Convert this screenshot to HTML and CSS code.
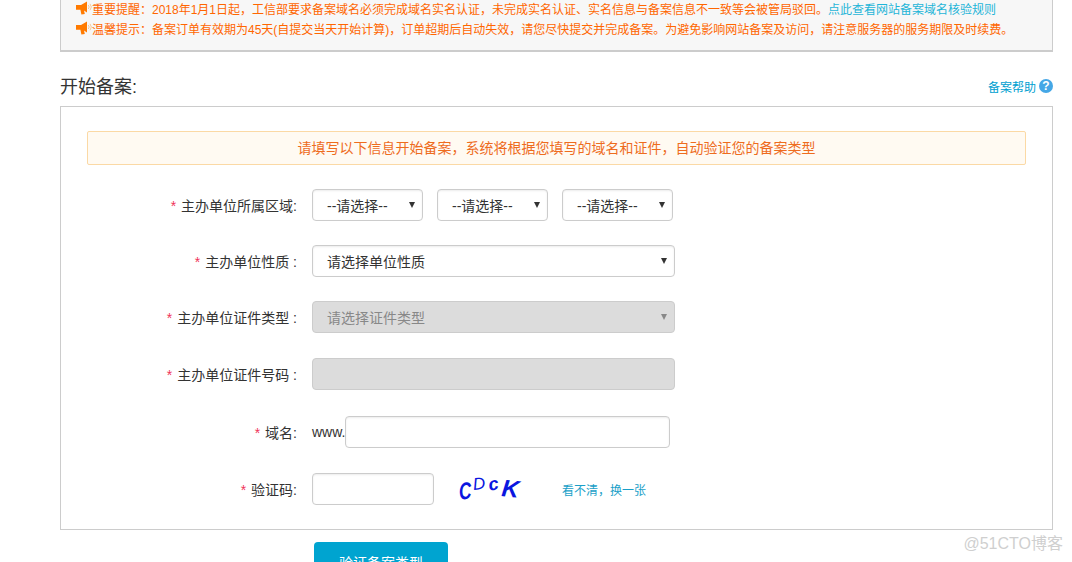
FILE: index.html
```html
<!DOCTYPE html>
<html lang="zh-CN">
<head>
    <meta charset="UTF-8">
    <meta name="viewport" content="width=device-width, initial-scale=1.0">
    <title>开始备案</title>
    <link rel="stylesheet" href="styles.css">
</head>
<body>
    <div class="page">
        <div class="tips">
            <p class="tip">
                <svg class="horn" width="16" height="14" viewBox="0 0 16 14"><path d="M0 4h5l6-3.5v11L8 9.5 8.8 13 5.4 13.6 4.4 8.8H0z" fill="#ff7a00"/><path d="M12.3 4a3 3 0 0 1 0 4M14 2.8a5 5 0 0 1 0 6.4" fill="none" stroke="#f5c89a" stroke-width="1"/></svg>
                重要提醒：2018年1月1日起，工信部要求备案域名必须完成域名实名认证，未完成实名认证、实名信息与备案信息不一致等会被管局驳回。<a class="link" href="#">点此查看网站备案域名核验规则</a>
            </p>
            <p class="tip">
                <svg class="horn" width="16" height="14" viewBox="0 0 16 14"><path d="M0 4h5l6-3.5v11L8 9.5 8.8 13 5.4 13.6 4.4 8.8H0z" fill="#ff7a00"/><path d="M12.3 4a3 3 0 0 1 0 4M14 2.8a5 5 0 0 1 0 6.4" fill="none" stroke="#f5c89a" stroke-width="1"/></svg>
                温馨提示：备案订单有效期为45天(自提交当天开始计算)，订单超期后自动失效，请您尽快提交并完成备案。为避免影响网站备案及访问，请注意服务器的服务期限及时续费。
            </p>
        </div>

        <div class="head">
            <h2>开始备案:</h2>
            <a class="help" href="#">备案帮助<span class="help-icon">?</span></a>
        </div>

        <div class="panel">
            <div class="hint">请填写以下信息开始备案，系统将根据您填写的域名和证件，自动验证您的备案类型</div>

            <div class="row">
                <label><i>*</i>主办单位所属区域:</label>
                <div class="controls">
                    <div class="select small">--请选择--<b class="arrow"></b></div>
                    <div class="select small">--请选择--<b class="arrow"></b></div>
                    <div class="select small">--请选择--<b class="arrow"></b></div>
                </div>
            </div>
            <div class="row">
                <label><i>*</i>主办单位性质 :</label>
                <div class="controls">
                    <div class="select wide">请选择单位性质<b class="arrow"></b></div>
                </div>
            </div>
            <div class="row">
                <label><i>*</i>主办单位证件类型 :</label>
                <div class="controls">
                    <div class="select wide disabled">请选择证件类型<b class="arrow"></b></div>
                </div>
            </div>
            <div class="row row-id">
                <label><i>*</i>主办单位证件号码 :</label>
                <div class="controls">
                    <div class="input wide disabled"></div>
                </div>
            </div>
            <div class="row row-domain">
                <label><i>*</i>域名:</label>
                <div class="controls">
                    <span class="www">www.</span>
                    <input class="input domain" type="text">
                </div>
            </div>
            <div class="row row-code">
                <label><i>*</i>验证码:</label>
                <div class="controls">
                    <input class="input code" type="text">
                    <div class="captcha"><span class="c1">C</span><span class="c2">D</span><span class="c3">c</span><span class="c4">K</span></div>
                    <a class="refresh" href="#">看不清，换一张</a>
                </div>
            </div>
        </div>

        <button class="submit">验证备案类型</button>
    </div>
    <div class="watermark">@51CTO博客</div>
</body>
</html>
```

FILE: styles.css
```css
*{
    margin: 0;
    padding: 0;
    box-sizing: border-box;
}
html,body{
    height: 100%;
    overflow: hidden;
    background: #fff;
}
body{
    font-family: "Liberation Sans", "Noto Sans CJK SC", sans-serif;
    font-size: 14px;
    color: #333;
}
a{
    text-decoration: none;
}
.page{
    padding: 0 19px 0 60px;
}
.tips{
    height: 52px;
    background-color: #f7f7f7;
    border: 2px solid #ccc;
    border-width: 0 1px 2px 1px;
    padding: 0 15px;
}
.tip{
    display: flex;
    align-items: center;
    height: 20px;
    font-size: 12px;
    color: #ff6600;
    white-space: nowrap;
}
.tip:first-child{
    height: 16px;
    margin-bottom: 2px;
}
.horn{
    flex: none;
    margin-right: 0;
}
.link{
    color: #1fb5d8;
}
.head{
    display: flex;
    align-items: center;
    justify-content: space-between;
    height: 54px;
    padding-top: 17px;
    padding-bottom: 5px;
}
.head h2{
    font-size: 18px;
    font-weight: normal;
    letter-spacing: 0;
}
.help{
    display: flex;
    align-items: center;
    margin-top: 2px;
    font-size: 12px;
    color: #00a0d0;
}
.help-icon{
    width: 14px;
    height: 14px;
    margin-left: 3px;
    border-radius: 50%;
    background-color: #45a7e6;
    color: #fff;
    font-size: 12px;
    font-weight: bold;
    line-height: 14px;
    text-align: center;
}
.panel{
    height: 424px;
    border: 1px solid #ccc;
    padding: 24px 26px 0;
}
.hint{
    height: 34px;
    line-height: 32px;
    background-color: #fffaf2;
    border: 1px solid #fbd9a5;
    border-radius: 2px;
    text-align: center;
    color: #ee6c1e;
    margin-bottom: 24px;
}
.row{
    display: grid;
    grid-template-columns: 210px 1fr;
    column-gap: 15px;
    align-items: center;
    height: 32px;
    margin-bottom: 24px;
}
.row-id{
    margin-top: 25px;
}
.row-domain{
    margin-top: 26px;
}
.row-code{
    margin-top: 25px;
}
label{
    text-align: right;
    white-space: nowrap;
}
label i{
    font-style: normal;
    color: #f0325a;
    margin-right: 5px;
}
.controls{
    display: flex;
    align-items: center;
}
.select,.input{
    height: 32px;
    border: 1px solid #ccc;
    border-radius: 4px;
    background-color: #fff;
    box-shadow: inset 0 1px 2px rgba(0,0,0,.08);
}
.select{
    display: flex;
    align-items: center;
    justify-content: space-between;
    padding: 0 6px 0 14px;
}
.small{
    width: 111px;
    margin-right: 14px;
}
.wide{
    width: 363px;
}
.disabled{
    background-color: #dcdcdc;
    color: #888;
    box-shadow: none;
}
.arrow{
    margin-right: 1px;
    border: 3px solid transparent;
    border-top: 6px solid #333;
    border-bottom: 0;
}
.disabled .arrow{
    border-top-color: #888;
}
.www{
    width: 33px;
}
.domain{
    width: 325px;
}
.code{
    width: 122px;
}
.input{
    outline: none;
}
.captcha{
    display: flex;
    align-items: flex-start;
    width: 104px;
    height: 32px;
    margin-left: 24px;
    color: #0a16e0;
    font-family: "Liberation Sans", sans-serif;
    font-style: italic;
    line-height: 1;
}
.captcha span{
    display: inline-block;
    transform-origin: left top;
}
.c1{
    font-size: 24px;
    font-weight: bold;
    width: 14px;
    margin-top: 7px;
    transform: scaleX(.72) rotate(-6deg);
}
.c2{
    font-size: 17px;
    width: 15px;
    margin-top: 3px;
    transform: rotate(-6deg);
}
.c3{
    font-size: 18px;
    width: 16px;
    margin-top: 3px;
    font-weight: bold;
    transform: rotate(-10deg);
}
.c4{
    font-size: 24px;
    font-weight: bold;
    margin-top: 3px;
    transform: rotate(6deg);
}
.refresh{
    color: #1a9fc8;
    font-size: 12px;
}
.submit{
    display: block;
    width: 134px;
    height: 40px;
    margin: 12px 0 0 254px;
    border: none;
    border-radius: 4px;
    background-color: #00a4d0;
    color: #fff;
    font-family: inherit;
    font-size: 14px;
}
.watermark{
    position: absolute;
    right: 9px;
    bottom: 8px;
    font-size: 16px;
    color: #cfcfcf;
}
```
